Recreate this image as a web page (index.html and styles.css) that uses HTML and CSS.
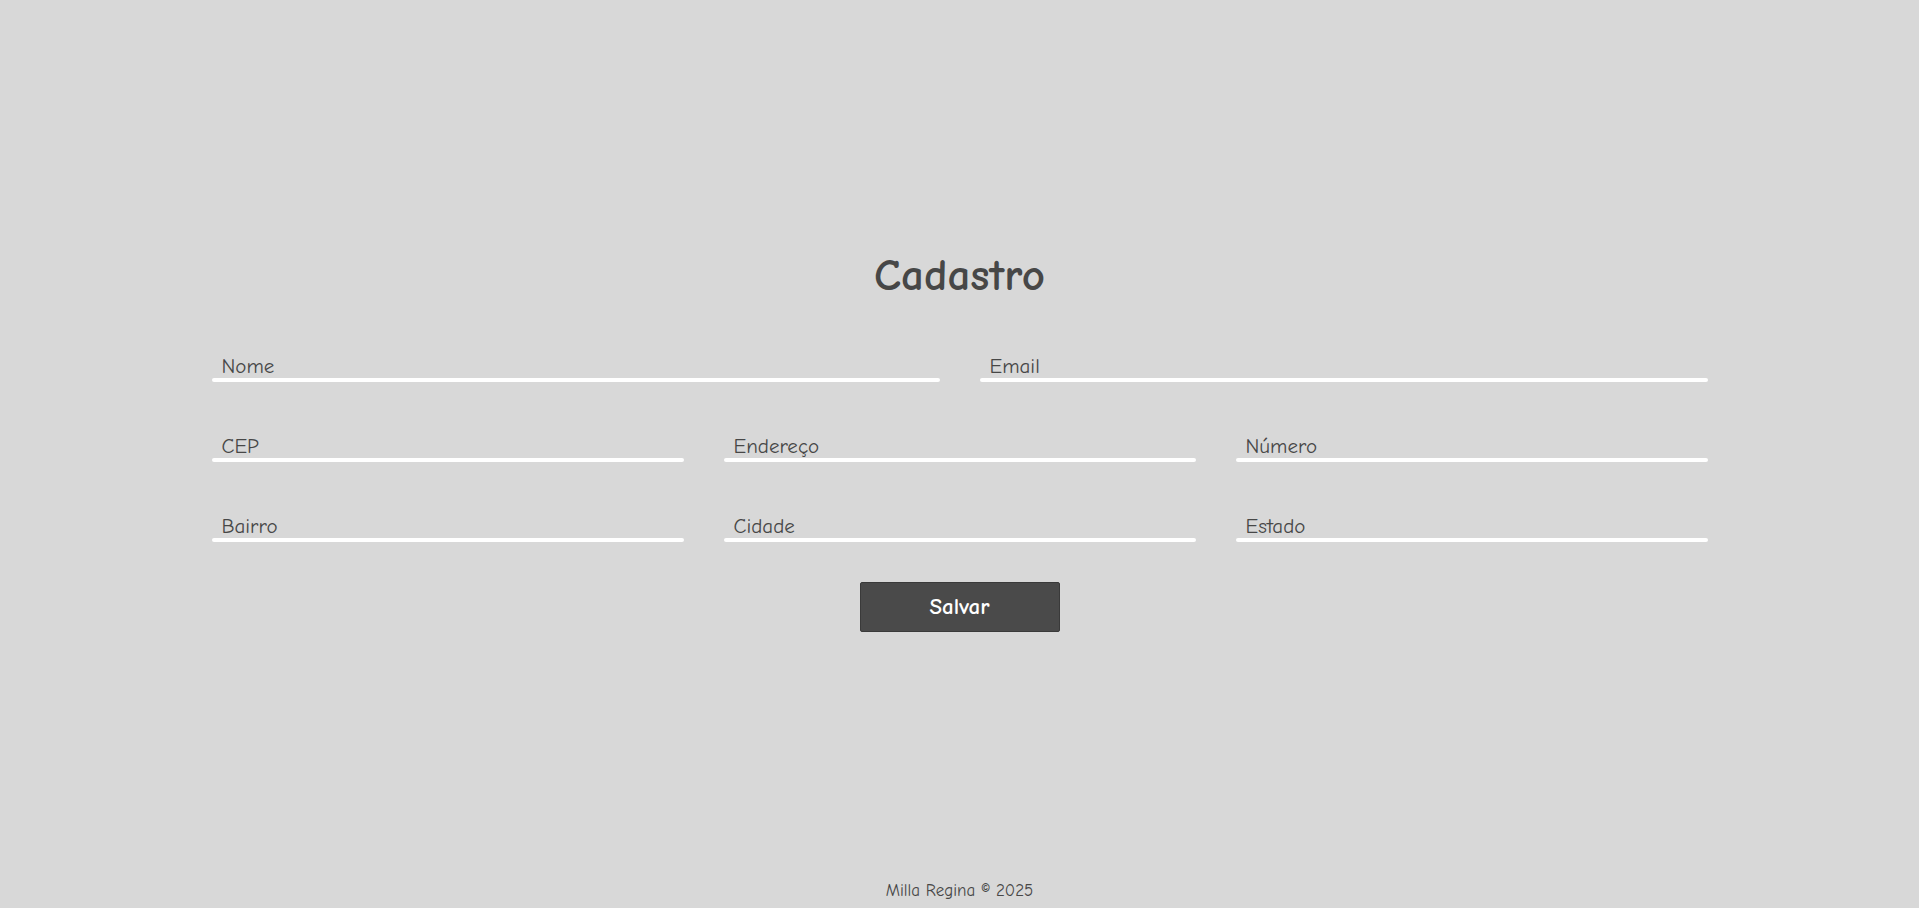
FILE: index.html
```html
<!DOCTYPE html>
<html lang="pt-BR">
<head>
<meta charset="utf-8">
<title>Cadastro</title>
<link rel="stylesheet" href="styles.css">
</head>
<body>
<main class="page">
  <form class="form">
    <h1 class="title">Cadastro</h1>
    <div class="row row-2">
      <label class="field"><input class="input" type="text" placeholder="Nome"></label>
      <label class="field"><input class="input" type="email" placeholder="Email"></label>
    </div>
    <div class="row row-3">
      <label class="field"><input class="input" type="text" placeholder="CEP"></label>
      <label class="field"><input class="input" type="text" placeholder="Endereço"></label>
      <label class="field"><input class="input" type="text" placeholder="Número"></label>
    </div>
    <div class="row row-3">
      <label class="field"><input class="input" type="text" placeholder="Bairro"></label>
      <label class="field"><input class="input" type="text" placeholder="Cidade"></label>
      <label class="field"><input class="input" type="text" placeholder="Estado"></label>
    </div>
    <div class="actions">
      <button class="btn" type="button">Salvar</button>
    </div>
  </form>
</main>
<footer class="footer">Milla Regina © 2025</footer>
</body>
</html>
```
FILE: styles.css
```css
* { box-sizing: border-box; }
html, body { height: 100%; }
body {
  margin: 0;
  background: #d8d8d8;
  color: #474747;
  font-family: "Comic Sans MS", "Comic Neue", "Open Sans", sans-serif;
  display: flex;
  flex-direction: column;
  min-height: 100vh;
}
.page {
  flex: 1;
  display: flex;
  align-items: center;
  justify-content: center;
}
.form {
  width: 1496px;
}
.title {
  margin: 0 0 53px;
  text-align: center;
  font-size: 45px;
  font-weight: 700;
  line-height: 52px;
  color: #474747;
}
.row {
  display: grid;
  gap: 40px;
  margin-bottom: 52px;
}
.row-2 { grid-template-columns: 1fr 1fr; }
.row-3 { grid-template-columns: 1fr 1fr 1fr; }
.field {
  display: block;
  position: relative;
  padding-bottom: 4px;
}
.field::after {
  content: "";
  position: absolute;
  left: 0;
  right: 0;
  bottom: 0;
  height: 4px;
  border-radius: 2px;
  background: #ffffff;
}
.input {
  display: block;
  width: 100%;
  height: 24px;
  line-height: 24px;
  border: none;
  outline: none;
  background: transparent;
  padding: 0 10px;
  font-family: inherit;
  font-size: 21px;
  color: #474747;
}
.input::placeholder { color: #474747; opacity: 1; }
.actions {
  display: flex;
  justify-content: center;
  margin-top: -12px;
}
.btn {
  width: 200px;
  height: 50px;
  background: #4a4a4a;
  border: 1px solid #3a3a3a;
  border-radius: 2px;
  color: #ffffff;
  font-family: inherit;
  font-size: 23px;
  font-weight: 700;
  cursor: pointer;
}
.footer {
  text-align: center;
  font-size: 17px;
  padding: 0 0 6px;
  line-height: 22px;
}
```
